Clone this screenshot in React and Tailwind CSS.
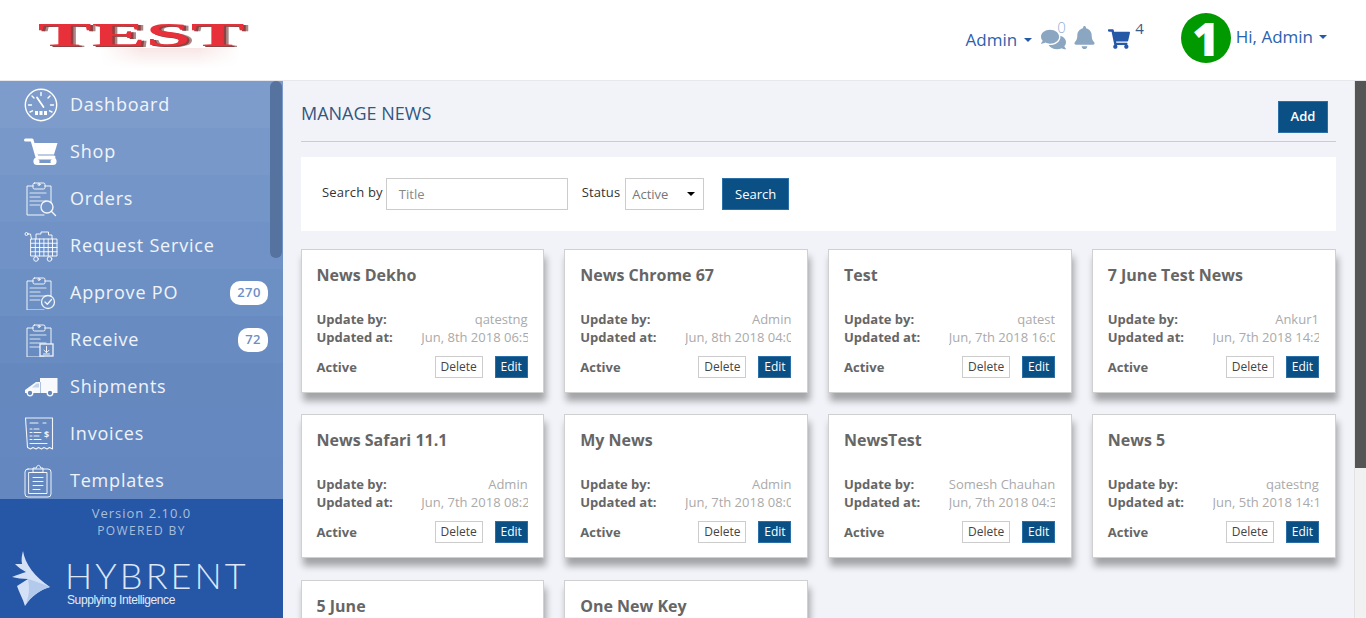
import React from "react";
import { FaComments, FaBell, FaShoppingCart } from "react-icons/fa";

const S = { fill: "none", stroke: "currentColor", strokeWidth: 1, strokeLinecap: "round", strokeLinejoin: "round" };

const Lines = ({ x = 6, y = 12, w = 18, n = 5, gap = 4 }) => (
  <g {...S} strokeWidth="1.2" opacity="0.85">
    {Array.from({ length: n }).map((_, i) => (
      <path key={i} d={`M${x} ${y + i * gap}h${i % 2 ? w - 6 : w}`} />
    ))}
  </g>
);

const Board = () => (
  <g {...S}>
    <path d="M9 5H3v29h17M21 5h6v17" />
    <rect x="9" y="2" width="12" height="6" rx="1.5" />
    <circle cx="15" cy="3.5" r="1" />
  </g>
);

const icons = {
  dash: (
    <svg width="34" height="34" viewBox="0 0 34 34" className="text-white">
      <g {...S} strokeWidth="1.4">
        <circle cx="17" cy="17" r="15.7" />
        <path d="M17 4.500v3M8 8l2 2M26 8l-2 2M4.500 17h3M26.500 17h3M6 24l2.500-1.200M28 24l-2.500-1.200" />
        <path d="M13 9.500l6.500 9.500" strokeWidth="1.800" />
      </g>
      <path fill="currentColor" d="M11 23h3v4h-3zM15.500 23h3v4h-3zM20 23h3v4h-3z" />
    </svg>
  ),
  shop: (
    <svg width="34" height="28" viewBox="0 0 34 28" className="text-white">
      <path d="M1.500 2H8l5 17h17" fill="none" stroke="currentColor" strokeWidth="3" strokeLinecap="round" strokeLinejoin="round" />
      <path fill="currentColor" d="M10 5h23.500l-3.500 11.500H13.500z" />
      <rect x="10.500" y="20.500" width="21" height="5.500" rx="2.750" fill="none" stroke="currentColor" strokeWidth="2.200" />
      <circle cx="13" cy="23.500" r="2.500" fill="currentColor" />
      <circle cx="29" cy="23.500" r="2.500" fill="currentColor" />
    </svg>
  ),
  orders: (
    <svg width="34" height="36" viewBox="0 0 34 36" className="text-white/90">
      <Board />
      <Lines x={6} y={12} w={16} n={4} />
      <g {...S} strokeWidth="1.400">
        <circle cx="23" cy="26" r="6" />
        <path d="M27.500 30.500l4 4" />
      </g>
    </svg>
  ),
  request: (
    <svg width="34" height="34" viewBox="0 0 34 34" className="text-white/90">
      <g {...S}>
        <circle cx="2.500" cy="5" r="1.500" />
        <path d="M4 5h2.500l1 5" />
        <path d="M7 10h26v17H7zM7 14.250h26M7 18.500h26M7 22.750h26M11.300 10v17M15.600 10v17M19.900 10v17M24.200 10v17M28.500 10v17" />
        <path d="M12 10V5h5V3h7.500v3h3.500v4" />
        <circle cx="12" cy="30" r="2.300" />
        <circle cx="25.500" cy="30" r="2.300" />
      </g>
    </svg>
  ),
  approve: (
    <svg width="34" height="34" viewBox="0 0 34 34" className="text-white/90">
      <Board />
      <Lines x={6} y={12} w={16} n={4} />
      <circle cx="24" cy="26" r="6.500" fill="#6f92c6" stroke="currentColor" strokeWidth="1.300" />
      <path d="M21 26l2.300 2.300L27.500 23.500" {...S} strokeWidth="1.300" />
    </svg>
  ),
  receive: (
    <svg width="34" height="34" viewBox="0 0 34 34" className="text-white/90">
      <Board />
      <Lines x={6} y={12} w={16} n={4} />
      <rect x="16" y="21" width="13" height="12" fill="#6a8dc3" stroke="currentColor" strokeWidth="1.300" />
      <path d="M22.500 23.500v6M20 27.200l2.500 2.500 2.500-2.500M19.500 31h6" {...S} />
    </svg>
  ),
  ship: (
    <svg width="34" height="20" viewBox="0 0 34 20" className="text-white/95">
      <path fill="currentColor" d="M16 1h17.500v15H16zM16.500 5H12L1 13v3h15.500z" />
      <path fill="#c3d3ea" d="M12.500 6.500h2.500v4H8z" />
      <circle cx="6" cy="16" r="2.800" fill="#6687bf" stroke="currentColor" strokeWidth="1.300" />
      <circle cx="26" cy="16" r="2.800" fill="#6687bf" stroke="currentColor" strokeWidth="1.300" />
    </svg>
  ),
  invoice: (
    <svg width="30" height="34" viewBox="0 0 30 34" className="text-white/90">
      <g {...S} strokeWidth="1.100">
        <path d="M1.500 1h27v31l-3-1.500-2.500 1.500-3-1.500-2.500 1.500-3-1.500-2.500 1.500-3-1.500-2.500 1.500-3-1.500z" />
        <path d="M6 6h8M19 6h3M6 12h2M10 12h5M6 15.500h2M10 15.500h7M6 19h2M10 19h5M6 22.500h2M10 22.500h7M6 26.500h17" />
      </g>
      <text x="20" y="21" fontSize="9" fontWeight="700" fill="currentColor" fontFamily="Open Sans, sans-serif">$</text>
    </svg>
  ),
  templates: (
    <svg width="28" height="34" viewBox="0 0 28 34" className="text-white/90">
      <g {...S} strokeWidth="1">
        <rect x="1" y="5" width="26" height="28" rx="3" />
        <rect x="5" y="8.500" width="18" height="21" />
        <path d="M9 8V4h3.500c0-3.500 4-3.500 4 0H19v4z" />
        <path d="M9 13.500h10M9 17.500h10M9 21.500h10M9 25.500h7" />
      </g>
    </svg>
  ),
};

const menu = [
  ["Dashboard", "dash", null, "bg-[#7d9bcb]"],
  ["Shop", "shop", null, "bg-[#7898c9]"],
  ["Orders", "orders", null, "bg-[#7495c8]"],
  ["Request Service", "request", null, "bg-[#7092c6]"],
  ["Approve PO", "approve", "270", "bg-[#6c8fc4]"],
  ["Receive", "receive", "72", "bg-[#688cc2]"],
  ["Shipments", "ship", null, "bg-[#6588bf]"],
  ["Invoices", "invoice", null, "bg-[#6488bf]"],
  ["Templates", "templates", null, "bg-[#6487bf]"],
];

const cards = [
  ["News Dekho", "qatestng", "Jun, 8th 2018 06:51"],
  ["News Chrome 67", "Admin", "Jun, 8th 2018 04:02"],
  ["Test", "qatest", "Jun, 7th 2018 16:05"],
  ["7 June Test News", "Ankur1", "Jun, 7th 2018 14:28"],
  ["News Safari 11.1", "Admin", "Jun, 7th 2018 08:21"],
  ["My News", "Admin", "Jun, 7th 2018 08:02"],
  ["NewsTest", "Somesh Chauhan", "Jun, 7th 2018 04:31"],
  ["News 5", "qatestng", "Jun, 5th 2018 14:12"],
  ["5 June", "", ""],
  ["One New Key", "", ""],
];

const Caret = () => (
  <span className="inline-block w-0 h-0 border-x-[4px] border-x-transparent border-t-[4px] border-t-[#2559a8]" />
);

function Card({ title, by, at }) {
  return (
    <div className="h-[144px] shrink-0 bg-white border border-[#d0d0d0] shadow-[2px_8px_7px_rgba(0,0,0,0.33)] pl-[15px] pr-[15.600px] pt-[13px]">
      <div className="text-[16px] leading-[24px] font-bold text-[#666]">{title}</div>
      <div className="mt-[23px] flex justify-between text-[13px] leading-[18px]">
        <div className="font-bold text-[#666]">
          <div>Update by:</div>
          <div>Updated at:</div>
        </div>
        <div className="w-[106.400px] text-right overflow-hidden whitespace-nowrap text-[#aaa]">
          <div>{by}</div>
          <div>{at}</div>
        </div>
      </div>
      <div className="mt-[10px] flex items-center">
        <span className="text-[13px] font-bold text-[#666] mt-[1px]">Active</span>
        <button className="ml-auto h-[22px] w-[48px] border border-[#ccc] bg-white text-[12px] leading-none text-[#444]">Delete</button>
        <button className="ml-[12px] h-[22px] w-[33px] border border-[#2b6fa8] bg-[#0a5085] text-[12px] leading-none text-white">Edit</button>
      </div>
    </div>
  );
}

export default function App() {
  return (
    <div className="h-[618px] w-full overflow-hidden flex flex-col bg-white font-['Open_Sans',sans-serif]">
      <header className="h-[81px] shrink-0 border-b border-[#e6e8ec] flex items-start relative">
        <div className="w-[283px] shrink-0 h-full relative overflow-hidden">
          <div className="absolute left-[38px] top-[22px] w-[207px] h-[26px] flex items-center justify-center overflow-visible">
            <span className="font-['Liberation_Serif',serif] font-bold text-[33px] leading-none text-[#e8303a] scale-x-[2.45] [text-shadow:1px_1px_0_#8f4040,2px_1px_0_#a88]">TEST</span>
          </div>
          <div className="absolute left-[100px] top-[48px] w-[140px] h-[20px] bg-gradient-to-b from-[#f8e6e6] to-white [mask-image:linear-gradient(to_right,transparent,black_30%,black_70%,transparent)]" />
        </div>
        <div className="ml-auto flex items-start pr-[39px] text-[#2559a8]">
          <div className="flex items-center gap-[7px] mt-[30px] h-[20px] text-[17px] text-[#2b62ad]">
            <span>Admin</span>
            <Caret />
          </div>
          <div className="relative ml-[9px] mt-[27px] text-[#8aa6c1]">
            <FaComments size={25} />
            <span className="absolute left-[16px] top-[-10px] text-[15px] font-light leading-[20px] text-[#8db1d6]">0</span>
          </div>
          <FaBell size={23} className="ml-[7px] mt-[26px] text-[#8aa6c1]" />
          <FaShoppingCart size={22} className="ml-[12px] mt-[28px] text-[#2559a8]" />
          <span className="ml-[5px] mt-[18px] text-[15px] leading-[20px] text-[#3a5a8c]">4</span>
          <div className="ml-[37px] mt-[13px] w-[50px] h-[50px] rounded-full bg-[#009900] flex items-center justify-center text-white text-[46px] font-extrabold leading-none">1</div>
          <div className="ml-[5px] mt-[26px] flex items-center gap-[6px] h-[22px] text-[17px] text-[#2b62ad]">
            <span>Hi, Admin</span>
            <Caret />
          </div>
        </div>
      </header>

      <div className="flex flex-1 min-h-0">
        <aside className="w-[283px] shrink-0 flex flex-col">
          <nav className="relative flex-1 min-h-0 overflow-hidden">
            {menu.map(([label, icon, badge, bg]) => (
              <div key={label} className={`h-[47px] flex items-center relative ${bg}`}>
                <div className="w-[70px] pl-[24px] shrink-0 flex items-center">{icons[icon]}</div>
                <span className="text-[18px] tracking-[0.8px] text-white/90">{label}</span>
                {badge && (
                  <span className="absolute right-[15px] h-[24px] px-[7px] rounded-[10px] bg-white text-[13px] font-semibold tracking-[0.5px] text-[#6c8fc6] flex items-center">{badge}</span>
                )}
              </div>
            ))}
            <div className="absolute right-[1px] top-0 w-[12px] h-[177px] rounded-[6px] bg-[#56729f]" />
          </nav>
          <div className="h-[119px] shrink-0 bg-[#2657a6] flex flex-col items-center pt-[5px]">
            <div className="text-[13px] leading-[18px] tracking-[1px] text-[#a9bfd9]">Version 2.10.0</div>
            <div className="text-[12px] leading-[18px] tracking-[1.400px] text-[#a9bfd9]">POWERED BY</div>
            <div className="w-full flex items-start pl-[11px] mt-[10px]">
              <svg width="40" height="58" viewBox="0 0 40 58" className="shrink-0">
                <path fill="#d3e0f6" d="M12 1C14 14 24 27 39 37C29 40 20 46 14 56C12 49 8 42 6 36L17 29C11 29 6 28 1 27C6 25 11 23 15 22C11 20 7 17 4 14C7 14 9 14 11 14C10 9 11 5 12 1Z" />
                <path fill="#b4caed" d="M17 29C24 31 32 34 39 37C29 40 20 46 14 56C18 47 19 38 17 29Z" />
              </svg>
              <div className="ml-[16px] pt-[10px]">
                <div className="font-['Lato',sans-serif] font-light text-[36px] leading-[30px] tracking-[3.100px] ml-[-2px] text-[#dbe6f7]">HYBRENT</div>
                <div className="font-['Liberation_Sans',sans-serif] font-medium text-[12px] leading-[14px] tracking-[-0.400px] text-[#e4ebf7] mt-[3px]">Supplying Intelligence</div>
              </div>
            </div>
          </div>
        </aside>

        <main className="flex-1 min-w-0 overflow-hidden bg-[#f1f3f8] px-[18px]">
          <div className="h-[61px] border-b border-[#ccc] flex items-start">
            <h1 className="mt-[19px] text-[18px] leading-[26px] text-[#34577f]">MANAGE NEWS</h1>
            <button className="ml-auto mr-[8px] mt-[20px] w-[50px] h-[32px] bg-[#0a5085] border border-[#2b6fa8] text-white text-[13px] font-semibold">Add</button>
          </div>
          <div className="mt-[15px] h-[74px] bg-white flex items-center pl-[21px]">
            <span className="text-[13px] font-medium tracking-[0.2px] text-[#333] mt-[-2px]">Search by</span>
            <div className="ml-[3px] w-[182px] h-[32px] border border-[#ccc] flex items-center pl-[12px] pt-[1px] text-[13px] text-[#888]">Title</div>
            <span className="ml-[14px] text-[13px] font-medium tracking-[0.1px] text-[#333] mt-[-2px]">Status</span>
            <div className="ml-[5px] w-[79px] h-[32px] border border-[#ccc] flex items-center pl-[6px] pt-[1px] text-[13px] text-[#777] relative">
              Active
              <span className="absolute right-[8px] top-[13px] w-0 h-0 border-x-[4px] border-x-transparent border-t-[4px] border-t-black" />
            </div>
            <button className="ml-[18px] w-[67px] h-[32px] pt-[1px] bg-[#0a5085] border border-[#2b6fa8] text-white text-[13px] font-medium">Search</button>
          </div>
          <div className="mt-[17.750px] ml-[-0.5px] grid grid-cols-[repeat(4,243.750px)] gap-x-[20px] gap-y-[21.500px]">
            {cards.map(([t, b, a]) => (
              <Card key={t} title={t} by={b} at={a} />
            ))}
          </div>
        </main>

        <div className="w-[12px] shrink-0 flex flex-col bg-[#f1f1f1] border-l border-[#e2e2e2]">
          <div className="h-[387px] bg-[#555]" />
        </div>
      </div>
    </div>
  );
}
